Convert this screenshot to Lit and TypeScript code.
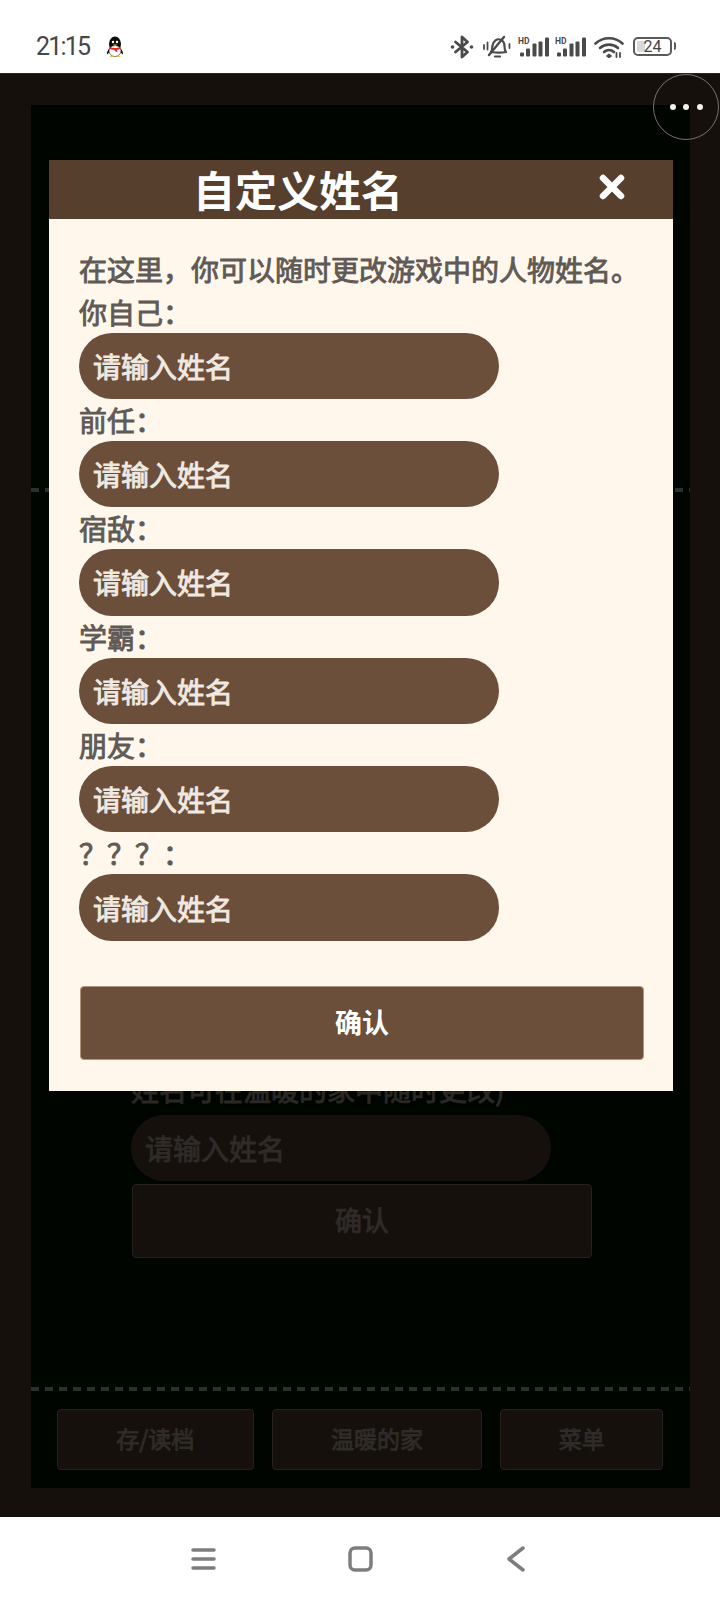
import { LitElement, html, css, svg } from 'lit';
import { customElement } from 'lit/decorators.js';

const FIELDS = ['你自己：', '前任：', '宿敌：', '学霸：', '朋友：', '？？？：'];
const PLACEHOLDER = '请输入姓名';

// the two HD cell icons are the same drawing
const signal = () => html`
  <svg class="signal" width="31" height="24" viewBox="0 0 31 24">
    <text x="0" y="8.500" font-size="8.500" font-weight="700" fill="#4a4a4a" font-family="Roboto, sans-serif">HD</text>
    <g fill="#4a4a4a">
      ${[
        [2, 17.5, 4, 4],
        [8, 13.5, 4, 8],
        [14.5, 8.5, 4, 13],
        [20.5, 6.5, 4, 15],
        [27, 2.5, 4, 19],
      ].map(([x, y, w, h]) => svg`<rect x=${x} y=${y} width=${w} height=${h} rx="1"></rect>`)}
    </g>
  </svg>
`;

@customElement('app-root')
export class AppRoot extends LitElement {
  static styles = css`
    :host {
      display: block;
      position: relative;
      width: 720px;
      height: 1600px;
      overflow: hidden;
      background: #fff;
      font-family: 'Noto Sans CJK SC', 'Noto Sans', sans-serif;
      text-spacing-trim: space-all;
    }

    .status {
      height: 73px;
      box-sizing: border-box;
      display: flex;
      align-items: center;
      padding: 20px 48px 0 36px;
      background: #fff;
      color: #474747;
    }
    .time {
      font-family: Roboto, sans-serif;
      font-size: 25px;
      line-height: 24px;
      letter-spacing: -1.800px;
      margin-right: 17px;
    }
    .status-icons {
      margin-left: auto;
      display: flex;
      align-items: center;
    }
    .signal {
      display: block;
      margin-left: 6px;
    }
    .bell {
      margin: 0 1px 0 9px;
    }
    .wifi {
      margin: 0 9px 0 8px;
    }
    .battery {
      position: relative;
      width: 39px;
      height: 19px;
      box-sizing: border-box;
      border: 2px solid #5a5a5a;
      border-radius: 5px;
      font-family: Roboto, sans-serif;
      font-size: 16px;
      line-height: 15px;
      text-align: center;
      color: #444;
    }
    .battery::before {
      content: '';
      position: absolute;
      left: 2px;
      top: 2px;
      bottom: 2px;
      width: 8px;
      background: #d9d9d9;
      border-radius: 1px;
    }
    .battery::after {
      content: '';
      position: absolute;
      right: -6px;
      top: 3px;
      width: 2.500px;
      height: 8px;
      background: #5a5a5a;
      border-radius: 0 2px 2px 0;
    }
    .battery span {
      position: relative;
    }

    .stage {
      height: 1444px;
      box-sizing: border-box;
      padding: 31px 30px 29px 31px;
      background: #16100c;
      border-top: 1px solid #2a2623;
    }
    .panel {
      height: 100%;
      display: flex;
      flex-direction: column;
      background: #000500;
    }
    .top {
      height: 383px;
      flex: none;
    }
    .dash {
      height: 4px;
      flex: none;
      background: repeating-linear-gradient(90deg, #26332b 0 8px, transparent 8px 14px);
    }
    .middle {
      flex: 1;
      min-height: 0;
      display: flex;
      flex-direction: column;
      align-items: flex-start;
      justify-content: flex-end;
      box-sizing: border-box;
      padding: 0 0 129px 100px;
    }
    .hint {
      font-size: 28px;
      line-height: 36px;
      color: #2b2825;
      margin-bottom: 8px;
      -webkit-text-stroke: 0.900px currentColor;
    }
    .ghost-input {
      width: 420px;
      height: 66px;
      box-sizing: border-box;
      border-radius: 33px;
      background: #16100c;
      color: #2e2b28;
      font-size: 28px;
      line-height: 66px;
      padding-left: 14px;
      -webkit-text-stroke: 0.900px currentColor;
    }
    .ghost-btn {
      box-sizing: border-box;
      background: #16100c;
      border: 1px solid #25211d;
      border-radius: 4px;
      color: #2e2b28;
      font-size: 23px;
      -webkit-text-stroke: 0.900px currentColor;
      padding-bottom: 3px;
      display: flex;
      align-items: center;
      justify-content: center;
    }
    .ghost-confirm {
      width: 460px;
      height: 74px;
      margin: 3px 0 0 1px;
      font-size: 27px;
    }
    .footer {
      flex: none;
      height: 97px;
      box-sizing: border-box;
      padding: 18px 27px 0 26px;
      display: flex;
      gap: 18px;
    }
    .footer .ghost-btn {
      height: 61px;
    }

    .more {
      position: absolute;
      left: 653px;
      top: 74px;
      width: 66px;
      height: 66px;
      box-sizing: border-box;
      border: 1.500px solid #77736f;
      border-radius: 50%;
      display: flex;
      align-items: center;
      justify-content: center;
      gap: 7.500px;
    }
    .more i {
      width: 6px;
      height: 6px;
      border-radius: 50%;
      background: #f4f2ef;
    }

    .modal {
      position: absolute;
      left: 49px;
      top: 160px;
      width: 624px;
      height: 931px;
      display: flex;
      flex-direction: column;
      background: #fff7ec;
    }
    .modal-head {
      height: 59px;
      flex: none;
      display: flex;
      align-items: center;
      background: #573f2d;
    }
    .modal-title {
      flex: none;
      width: 498px;
      margin-top: -2px;
      text-align: center;
      font-size: 42px;
      line-height: 59px;
      font-weight: 700;
      color: #fff;
    }
    .close {
      margin: -6px 0 0 52px;
      display: block;
    }
    .modal-body {
      flex: 1;
      display: flex;
      flex-direction: column;
      padding: 29px 29px 32px 30px;
    }
    .intro,
    .label {
      font-size: 28px;
      line-height: 42px;
      color: #5f5a56;
      white-space: nowrap;
      -webkit-text-stroke: 0.900px currentColor;
    }
    .intro {
      height: 42.500px;
    }
    .label {
      height: 42px;
    }
    .name-input {
      display: block;
      width: 420px;
      height: 66.400px;
      box-sizing: border-box;
      border: none;
      outline: none;
      border-radius: 33px;
      padding: 0 14px;
      background: #6b4f3a;
      color: #efe9e2;
      font: 400 28px 'Noto Sans CJK SC', sans-serif;
    }
    .name-input::placeholder {
      color: #efe9e2;
      opacity: 1;
      -webkit-text-stroke: 0.900px #efe9e2;
    }
    .confirm {
      margin: 45px 0 0 1px;
      width: 564px;
      height: 74px;
      box-sizing: border-box;
      border: 1px solid #b3927a;
      border-radius: 4px;
      padding: 0 0 3px;
      background: #6b4f3a;
      color: #fff;
      font: 700 27px 'Noto Sans CJK SC', sans-serif;
    }

    .nav {
      height: 83px;
      background: #fff;
    }
    .nav-icons {
      display: flex;
      align-items: center;
      height: 100%;
      padding: 0 0 0 191px;
      box-sizing: border-box;
    }
    .nav-icons svg {
      display: block;
      fill: none;
      stroke: #7d7d7d;
      stroke-width: 3.500;
      stroke-linecap: round;
      stroke-linejoin: round;
    }
    .nav-icons .home {
      margin-left: 132px;
    }
    .nav-icons .back {
      margin-left: 134px;
    }
  `;

  render() {
    return html`
      <div class="status">
        <span class="time">21:15</span>
        <svg width="18" height="22" viewBox="0 0 18 22">
          <ellipse cx="9" cy="8" rx="6" ry="7.5" fill="#0b0b0b"></ellipse>
          <path d="M3.500 12C1.500 15 .5 17 1 18.500L4 16ZM14.500 12C16.500 15 17.500 17 17 18.500L14 16Z" fill="#111"></path>
          <ellipse cx="9" cy="15" rx="6" ry="5.500" fill="#fff" stroke="#222" stroke-width=".6"></ellipse>
          <path d="M3.500 10.500C7 12.500 11 12.500 14.500 10.500L14.800 12.800C13 13.500 12 13.800 11 14L11.500 16.500 9 15 8.500 14C6.500 13.800 5 13.500 3.200 12.800Z" fill="#e0262b"></path>
          <path d="M6.500 8.500H11.500L9 10Z" fill="#f3b21c"></path>
          <circle cx="7" cy="6" r="1.200" fill="#fff"></circle>
          <circle cx="11" cy="6" r="1.200" fill="#fff"></circle>
          <path d="M3.500 20.500C5 19.500 7 20 7.500 21H3.500ZM14.500 20.500C13 19.500 11 20 10.500 21H14.500Z" fill="#f0b428"></path>
        </svg>
        <div class="status-icons">
          <svg width="24" height="24" viewBox="0 0 24 24" fill="none" stroke="#4a4a4a" stroke-width="2.800" stroke-linejoin="round" stroke-linecap="round">
            <path d="M5.500 7l12 10-5.500 5V2l5.500 5-12 10"></path>
            <circle cx="2.500" cy="12" r="1.800" fill="#4a4a4a" stroke="none"></circle>
            <circle cx="21.500" cy="12" r="1.800" fill="#4a4a4a" stroke="none"></circle>
          </svg>
          <svg class="bell" width="28" height="24" viewBox="0 0 28 24" fill="none" stroke="#4a4a4a" stroke-width="2.200" stroke-linecap="round" stroke-linejoin="round">
            <path d="M8 17c1.500-2 1-4 1.500-6.500C10.500 6 14 3.500 17 4.500c3 .8 4.500 4 4.500 7 0 2.500.5 4.500 1.500 5.500-4.500 1-9 1-15 0Z"></path>
            <path d="M6 20L21 2" stroke-width="2.400"></path>
            <path d="M12 21.500h5" stroke-width="2.200"></path>
            <path d="M1 10v4M4.500 7.500v7M26.500 9v4" stroke-width="1.800"></path>
          </svg>
          ${signal()} ${signal()}
          <svg class="wifi" width="30" height="22" viewBox="0 0 30 22" fill="none" stroke="#4a4a4a" stroke-width="2.600" stroke-linecap="round">
            <path d="M1.500 7.500C9 .5 21 .5 28.500 7.500"></path>
            <path d="M6 12C11 7.500 19 7.500 24 12"></path>
            <path d="M10 16c3-2.500 7-2.500 10 0"></path>
            <path d="M13 20l2 1.500 2-1.500-2-1.500Z" fill="#4a4a4a" stroke-width="1.500"></path>
            <path d="M22.500 17v4M26 17v4" stroke-width="1.800"></path>
          </svg>
          <div class="battery"><span>24</span></div>
        </div>
      </div>

      <div class="stage">
        <div class="panel">
          <div class="top"></div>
          <div class="dash"></div>
          <div class="middle">
            <div class="hint">姓名可在温暖的家中随时更改)</div>
            <div class="ghost-input">${PLACEHOLDER}</div>
            <div class="ghost-btn ghost-confirm">确认</div>
          </div>
          <div class="dash"></div>
          <div class="footer">
            <div class="ghost-btn" style="width:197px">存/读档</div>
            <div class="ghost-btn" style="width:211px">温暖的家</div>
            <div class="ghost-btn" style="width:163px">菜单</div>
          </div>
        </div>
      </div>

      <div class="nav">
        <div class="nav-icons">
          <svg width="25" height="24" viewBox="0 0 25 24">
            <path d="M2 3h21M2 12h21M2 21h21"></path>
          </svg>
          <svg class="home" width="25" height="26" viewBox="0 0 25 26">
            <rect x="2" y="2" width="21" height="22" rx="5"></rect>
          </svg>
          <svg class="back" width="18" height="26" viewBox="0 0 18 26">
            <path d="M16 2L2 13l14 11"></path>
          </svg>
        </div>
      </div>

      <div class="more"><i></i><i></i><i></i></div>

      <div class="modal">
        <div class="modal-head">
          <div class="modal-title">自定义姓名</div>
          <svg class="close" width="26" height="26" viewBox="0 0 26 26" stroke="#fff" stroke-width="6.500" stroke-linecap="round">
            <path d="M4 4l18 18M22 4L4 22"></path>
          </svg>
        </div>
        <div class="modal-body">
          <div class="intro">在这里，你可以随时更改游戏中的人物姓名。</div>
          ${FIELDS.map(
            f => html`
              <div class="label">${f}</div>
              <input class="name-input" type="text" placeholder=${PLACEHOLDER} />
            `
          )}
          <button class="confirm">确认</button>
        </div>
      </div>
    `;
  }
}
